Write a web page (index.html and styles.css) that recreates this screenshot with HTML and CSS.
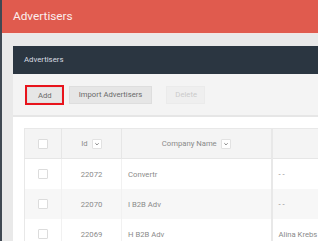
FILE: index.html
```html
<!DOCTYPE html>
<html>
<head>
<meta charset="utf-8">
<link rel="stylesheet" href="styles.css">
</head>
<body>
<div class="page">
  <header class="topbar">Advertisers</header>
  <main class="content">
    <section class="panel">
      <div class="panel-head">Advertisers</div>
      <div class="toolbar">
        <span class="focus-ring"><button class="btn">Add</button></span>
        <button class="btn">Import Advertisers</button>
        <button class="btn btn-disabled">Delete</button>
      </div>
      <div class="panel-body">
        <table class="grid">
          <colgroup>
            <col class="c-check"><col class="c-id"><col class="c-name"><col class="c-rest">
          </colgroup>
          <thead>
            <tr>
              <th><span class="cb"></span></th>
              <th><span class="th-inner">Id <span class="sort"><svg viewBox="0 0 8 8" width="6" height="6"><path d="M1.8 3 L4 5.2 L6.2 3" fill="none" stroke="#777" stroke-width="1.2"/></svg></span></span></th>
              <th><span class="th-inner">Company Name <span class="sort"><svg viewBox="0 0 8 8" width="6" height="6"><path d="M1.8 3 L4 5.2 L6.2 3" fill="none" stroke="#777" stroke-width="1.2"/></svg></span></span></th>
              <th class="sep"></th>
            </tr>
          </thead>
          <tbody>
            <tr>
              <td><span class="cb"></span></td>
              <td class="num">22072</td>
              <td class="txt">Convertr</td>
              <td class="txt sep">- -</td>
            </tr>
            <tr class="alt">
              <td><span class="cb"></span></td>
              <td class="num">22070</td>
              <td class="txt">I B2B Adv</td>
              <td class="txt sep">- -</td>
            </tr>
            <tr>
              <td><span class="cb"></span></td>
              <td class="num">22069</td>
              <td class="txt">H B2B Adv</td>
              <td class="txt sep">Alina Krebs</td>
            </tr>
          </tbody>
        </table>
      </div>
    </section>
  </main>
</div>
</body>
</html>
```
FILE: styles.css
```css
html, body {
  margin: 0;
  padding: 0;
  height: 100%;
  overflow: hidden;
}
body {
  font-family: Roboto, "Liberation Sans", sans-serif;
  background: #e9e9e9;
}
.page {
  border-left: 2px solid #3f4852;
  min-height: 100%;
  box-sizing: border-box;
}
.topbar {
  height: 34px;
  line-height: 33px;
  background: #e05b4e;
  color: #fbeeed;
  font-size: 11.8px;
  padding-left: 11px;
  border-bottom: 1px solid #f2e6e4;
  box-sizing: border-box;
}
.content {
  padding: 12px 0 0 11px;
  overflow: hidden;
}
.panel {
  width: 420px;
}
.panel-head {
  height: 28px;
  line-height: 28px;
  background: #2b3641;
  color: #d9dde1;
  font-size: 7.8px;
  padding-left: 11px;
}
.toolbar {
  background: #f4f4f4;
  height: 41px;
  border-bottom: 2px solid #e6e6e6;
  display: flex;
  align-items: center;
  padding-left: 12px;
}
.focus-ring {
  display: flex;
  border: 2px solid #e8141c;
  margin-right: 5px;
}
.btn {
  font-family: Roboto, "Liberation Sans", sans-serif;
  font-size: 7.7px;
  color: #6a6a6a;
  background: #e6e6e6;
  border: 1px solid #dedede;
  height: 18px;
  padding: 0 9px;
  margin: 0;
  line-height: 16px;
}
.focus-ring .btn {
  height: 16px;
  padding: 0 9px 0 10px;
  border-color: #e0e0e0;
}
.btn + .btn {
  margin-left: 14px;
}
.btn-disabled {
  background: #efefef;
  border-color: #ebebeb;
  color: #cbcbcb;
  padding: 0 7px 0 8px;
}
.panel-body {
  background: #fff;
  padding: 11px 0 0 11px;
  height: 140px;
}
.grid {
  border-collapse: collapse;
  table-layout: fixed;
  width: 420px;
  border: 1px solid #e8e8e8;
  font-size: 7.7px;
  color: #8a8a8a;
}
.c-check { width: 37px; }
.c-id { width: 60px; }
.c-name { width: 150px; }
.grid th {
  background: #f4f4f4;
  height: 29px;
  font-weight: normal;
  border-left: 1px solid #e6e6e6;
  border-bottom: 1px solid #e6e6e6;
  padding: 0;
  text-align: center;
}
.grid th:first-child { border-left: 0; }
.grid th.sep, .grid td.sep { border-left: 2px solid #e8e8e8; }
.th-inner {
  display: inline-flex;
  align-items: center;
  gap: 4px;
}
.sort {
  display: inline-flex;
  align-items: center;
  justify-content: center;
  width: 8px;
  height: 8px;
  background: #fff;
  border: 1px solid #e2e2e2;
  border-radius: 1px;
}
.grid td {
  height: 30px;
  padding: 0;
  text-align: center;
  border-left: 1px solid #f1f1f1;
}
.grid td:first-child { border-left: 0; }
.grid td.txt {
  text-align: left;
  padding-left: 6px;
}
.grid tr.alt td { background: #f7f7f7; }
.cb {
  display: inline-block;
  width: 8px;
  height: 8px;
  border: 1px solid #dcdcdc;
  background: #fff;
  border-radius: 1px;
  vertical-align: middle;
}
```
